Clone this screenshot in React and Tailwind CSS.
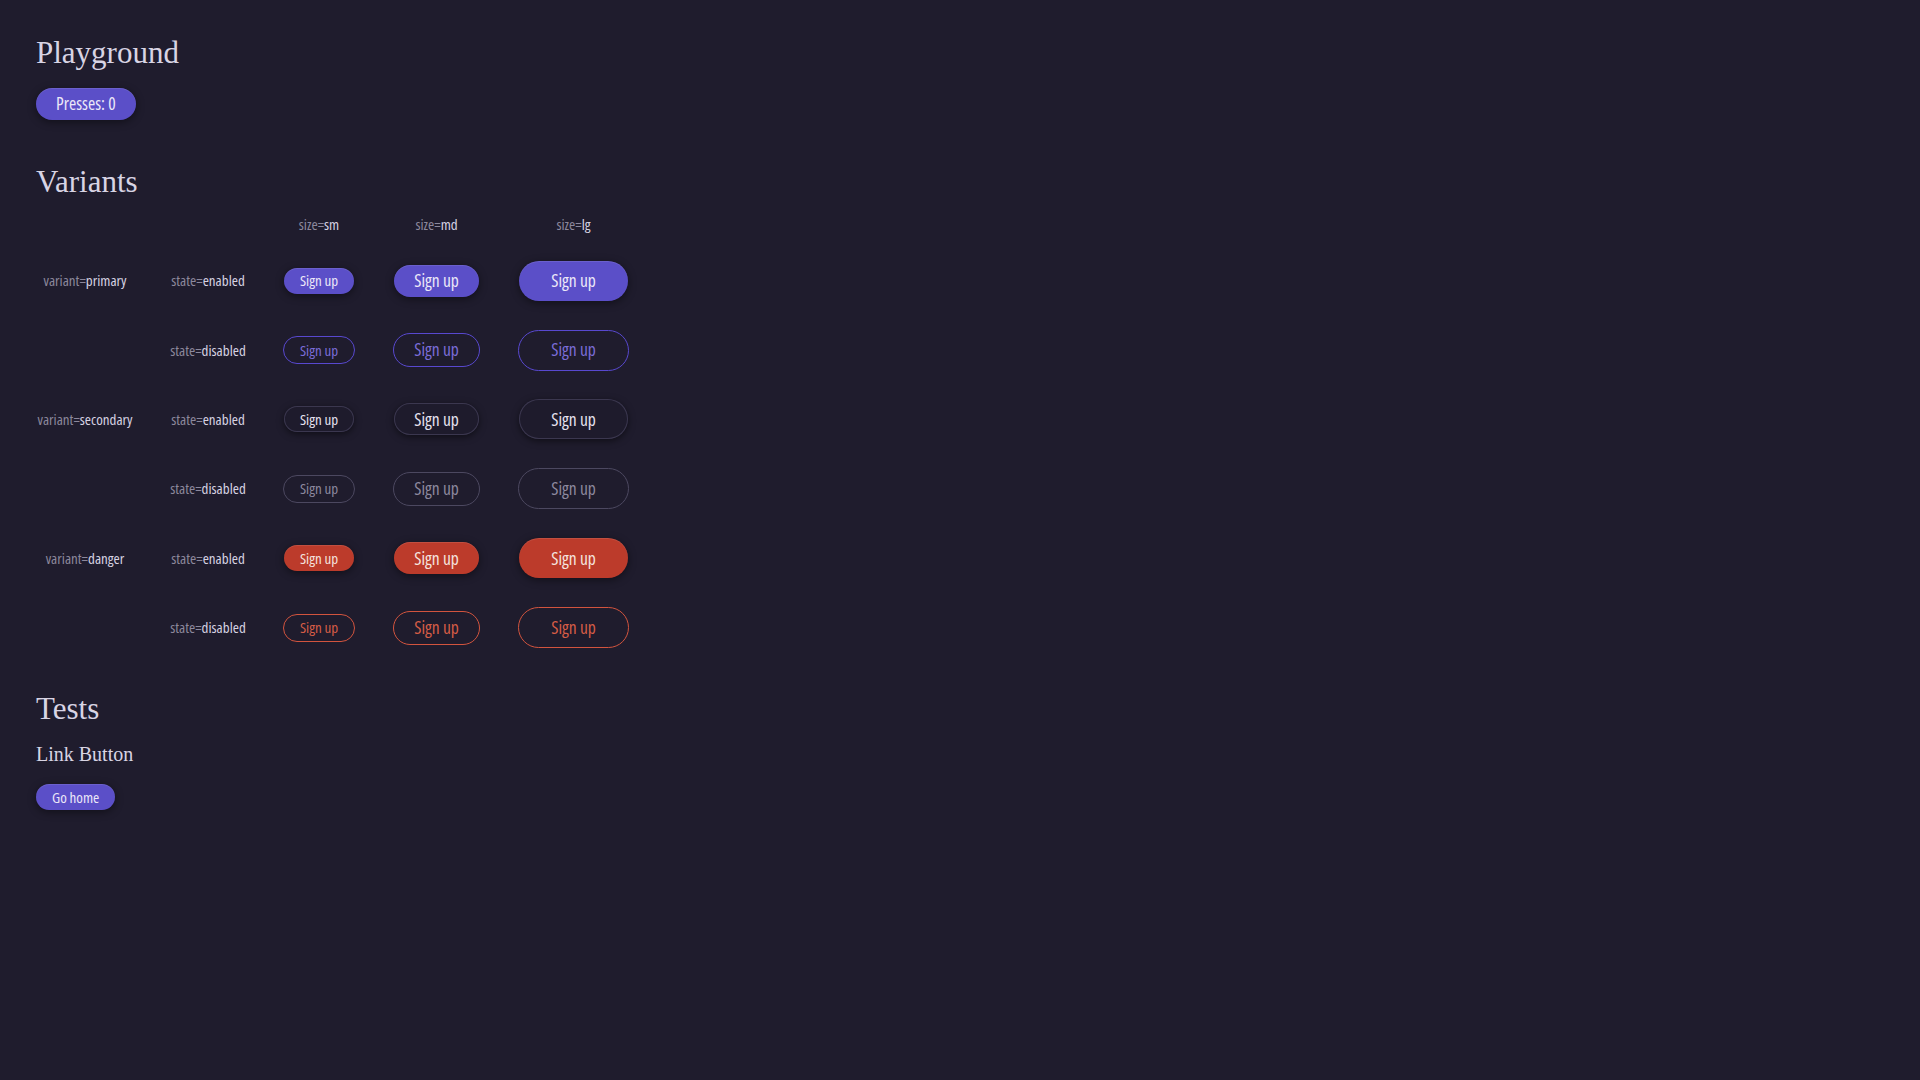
import React from "react";

const SANS = "font-['Open_Sans',sans-serif] font-stretch-75%";
const SERIF = "font-['Liberation_Serif',serif]";

const sizeCls = {
  sm: { en: "h-[26px] px-[16px] text-[15px]", dis: "h-[28px] px-[16px] text-[15px]" },
  md: { en: "h-[32px] px-[20px] text-[17.5px]", dis: "h-[34px] px-[20px] text-[17.5px]" },
  lg: { en: "h-[40px] px-[32px] text-[17.5px]", dis: "h-[41px] px-[32px] text-[17.5px]" },
};

const variantCls = {
  primary: {
    en: "bg-[#5b4fc8] text-[#ece8f8] shadow-[inset_0_1px_0_rgba(255,255,255,0.10),0_2px_8px_rgba(0,0,0,0.45)]",
    dis: "border border-[#5848cf] text-[#7b6dd8] bg-transparent",
  },
  secondary: {
    en: "bg-[#1e1b2c] text-[#e6e2f0] shadow-[inset_0_0_0_1px_#3b374f,0_2px_7px_rgba(0,0,0,0.5)]",
    dis: "border border-[#4c4860] text-[#8d899f] bg-transparent",
  },
  danger: {
    en: "bg-[#bc3b2b] text-[#f5e3df] shadow-[inset_0_1px_0_rgba(255,255,255,0.10),0_2px_8px_rgba(0,0,0,0.45)]",
    dis: "border border-[#d2543e] text-[#d65c46] bg-transparent",
  },
};

function Btn({ variant = "primary", size = "md", disabled = false, children }) {
  const k = disabled ? "dis" : "en";
  return (
    <button
      disabled={disabled}
      className={`${SANS} ${sizeCls[size][k]} ${variantCls[variant][k]} inline-flex items-center justify-center rounded-full leading-none whitespace-nowrap`}
    >
      {children}
    </button>
  );
}

function Label({ k, v }) {
  return (
    <span className={`${SANS} text-[15px] leading-none whitespace-nowrap`}>
      <span className="text-[#8c889c]">{k}=</span>
      <span className="text-[#d6d2e2]">{v}</span>
    </span>
  );
}

const rows = [
  { variant: "primary", disabled: false, showVariant: true },
  { variant: "primary", disabled: true },
  { variant: "secondary", disabled: false, showVariant: true },
  { variant: "secondary", disabled: true },
  { variant: "danger", disabled: false, showVariant: true },
  { variant: "danger", disabled: true },
];

export default function App() {
  return (
    <div className="min-h-screen w-full bg-[#1f1c2d] pl-[36px] pt-[37px] text-[#d6d2e2]">
      <h1 className={`${SERIF} text-[31px] leading-none text-[#d8d4e4]`}>Playground</h1>
      <div className="mt-[20px]">
        <Btn>Presses: 0</Btn>
      </div>

      <h1 className={`${SERIF} mt-[46px] text-[31px] leading-none text-[#d8d4e4]`}>Variants</h1>
      <div className="mt-[5px] grid grid-cols-[98px_76px_74px_89px_113px] grid-rows-[44px_repeat(6,69.4px)] gap-x-[36px]">
        <div />
        <div />
        {["sm", "md", "lg"].map((s) => (
          <div key={s} className="flex items-center justify-center">
            <Label k="size" v={s} />
          </div>
        ))}
        {rows.map((r, i) => (
          <React.Fragment key={i}>
            <div className="flex items-center justify-center">
              {r.showVariant ? <Label k="variant" v={r.variant} /> : null}
            </div>
            <div className="flex items-center justify-center">
              <Label k="state" v={r.disabled ? "disabled" : "enabled"} />
            </div>
            {["sm", "md", "lg"].map((s) => (
              <div key={s} className="flex items-center justify-center">
                <Btn variant={r.variant} size={s} disabled={r.disabled}>
                  Sign up
                </Btn>
              </div>
            ))}
          </React.Fragment>
        ))}
      </div>

      <h1 className={`${SERIF} mt-[31px] text-[31px] leading-none text-[#d8d4e4]`}>Tests</h1>
      <h2 className={`${SERIF} mt-[20px] text-[20px] leading-none text-[#d8d4e4]`}>Link Button</h2>
      <div className="mt-[20px]">
        <Btn size="sm">Go home</Btn>
      </div>
    </div>
  );
}
